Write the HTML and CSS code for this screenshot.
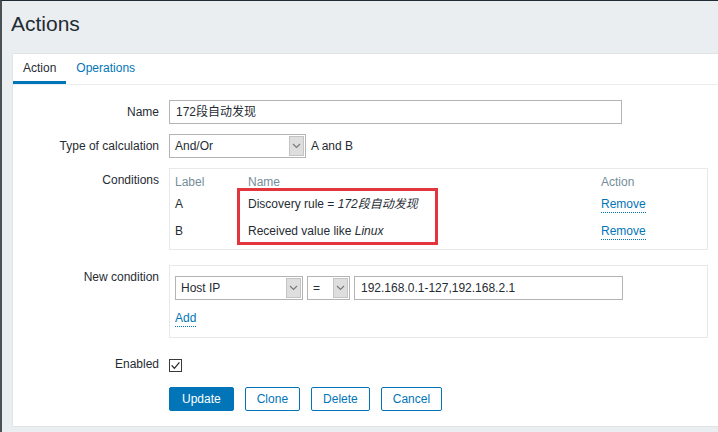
FILE: index.html
```html
<!DOCTYPE html>
<html>
<head>
<meta charset="utf-8">
<title>Actions</title>
<link rel="stylesheet" href="styles.css">
</head>
<body>
<header class="page-header">
  <h1 class="page-title">Actions</h1>
</header>
<main class="panel">
  <ul class="tabs">
    <li class="tab tab-active">Action</li>
    <li class="tab">Operations</li>
  </ul>
  <form class="form">
    <div class="row">
      <label class="label">Name</label>
      <div class="field"><div class="input input-name">172段自动发现</div></div>
    </div>
    <div class="row">
      <label class="label">Type of calculation</label>
      <div class="field field-inline">
        <div class="select select-calc"><span class="select-text">And/Or</span><span class="select-btn"><svg width="9" height="6" viewBox="0 0 9 6"><path d="M1 1l3.5 3.5L8 1" fill="none" stroke="#7a7a7a" stroke-width="1.2"/></svg></span></div>
        <span class="calc-text">A and B</span>
      </div>
    </div>
    <div class="row row-cond">
      <label class="label">Conditions</label>
      <div class="field">
        <div class="box cond-box">
          <div class="cond-grid cond-head">
            <span>Label</span><span>Name</span><span>Action</span>
          </div>
          <div class="cond-grid cond-row">
            <span>A</span><span>Discovery rule = <i>172段自动发现</i></span><span><a class="link">Remove</a></span>
          </div>
          <div class="cond-grid cond-row">
            <span>B</span><span>Received value like <i>Linux</i></span><span><a class="link">Remove</a></span>
          </div>
          <div class="highlight"></div>
        </div>
      </div>
    </div>
    <div class="row row-new">
      <label class="label">New condition</label>
      <div class="field">
        <div class="box new-box">
          <div class="new-line">
            <div class="select select-type"><span class="select-text">Host IP</span><span class="select-btn"><svg width="9" height="6" viewBox="0 0 9 6"><path d="M1 1l3.5 3.5L8 1" fill="none" stroke="#7a7a7a" stroke-width="1.2"/></svg></span></div>
            <div class="select select-op"><span class="select-text">=</span><span class="select-btn"><svg width="9" height="6" viewBox="0 0 9 6"><path d="M1 1l3.5 3.5L8 1" fill="none" stroke="#7a7a7a" stroke-width="1.2"/></svg></span></div>
            <div class="input input-ip">192.168.0.1-127,192.168.2.1</div>
          </div>
          <div class="add-line"><a class="link">Add</a></div>
        </div>
      </div>
    </div>
    <div class="row row-enabled">
      <label class="label">Enabled</label>
      <div class="field field-check">
        <svg class="checkbox" width="13" height="13" viewBox="0 0 13 13"><rect x="0.5" y="0.5" width="12" height="12" fill="#fff" stroke="#3a3a3a"/><path d="M2.6 6.4l2.8 2.9 5-6" fill="none" stroke="#2b2b2b" stroke-width="1.3"/></svg>
      </div>
    </div>
    <div class="row row-buttons">
      <span class="label"></span>
      <div class="field buttons">
        <button type="button" class="btn btn-primary">Update</button>
        <button type="button" class="btn btn-alt">Clone</button>
        <button type="button" class="btn btn-alt">Delete</button>
        <button type="button" class="btn btn-alt">Cancel</button>
      </div>
    </div>
  </form>
</main>
</body>
</html>
```
FILE: styles.css
```css
* { box-sizing: border-box; }
html, body { height: 100%; }
body {
  margin: 0;
  background: #ebeef0;
  border-top: 1px solid #1f2c33;
  border-left: 2px solid #4b5055;
  font-family: "Liberation Sans", Arial, "Noto Sans CJK SC", sans-serif;
  font-size: 12px;
  color: #1f2c33;
  overflow: hidden;
}
.page-header {
  height: 52px;
  padding: 11px 0 0 9px;
}
.page-title {
  margin: 0;
  font-size: 21px;
  line-height: 24px;
  font-weight: normal;
  color: #1f2c33;
}
.panel {
  margin-left: 10px;
  margin-right: -6px;
  background: #fff;
  border: 1px solid #dfe4e7;
  padding-bottom: 15px;
}
.tabs {
  display: flex;
  list-style: none;
  margin: 0;
  padding: 0;
  border-bottom: 1px solid #ebeef0;
  height: 31px;
}
.tab {
  padding: 1px 10px 0;
  line-height: 27px;
  color: #0275b8;
  font-size: 12px;
}
.tab-active {
  color: #1f2c33;
  border-bottom: 3px solid #0275b8;
}
.form {
  padding-top: 15px;
}
.row {
  display: grid;
  grid-template-columns: 146px 1fr;
  column-gap: 10px;
  margin-bottom: 10px;
}
.label {
  text-align: right;
  line-height: 24px;
  color: #1f2c33;
}
.field { min-height: 24px; }
.field-inline {
  display: flex;
  align-items: center;
  gap: 5px;
}
.input {
  height: 24px;
  border: 1px solid #b4b4b4;
  padding: 0 6px;
  line-height: 22px;
  background: #fff;
  color: #1f2c33;
}
.input-name { width: 453px; }
.input-ip { width: 269px; }
.select {
  display: flex;
  height: 24px;
  border: 1px solid #b4b4b4;
  background: #fff;
}
.select-text {
  flex: 1;
  padding: 0 5px;
  line-height: 22px;
}
.select-btn {
  width: 15px;
  margin: 1px;
  border: 1px solid #c4c4c4;
  background: #dedede;
  display: flex;
  align-items: center;
  justify-content: center;
}
.select-calc { width: 137px; }
.select-type { width: 128px; }
.select-op { width: 43px; }
.calc-text { line-height: 24px; }
.box {
  position: relative;
  width: 539px;
  border: 1px solid #e6e9eb;
}
.cond-box { padding: 5px 5px 4px; }
.cond-grid {
  display: grid;
  grid-template-columns: 73px 353px 1fr;
}
.cond-head {
  height: 17px;
  line-height: 17px;
  color: #768d99;
}
.cond-row {
  height: 27px;
  line-height: 27px;
}
.link {
  color: #0275b8;
  border-bottom: 1px dotted #0275b8;
  padding-bottom: 1px;
}
.highlight {
  position: absolute;
  left: 67px;
  top: 19px;
  width: 201px;
  height: 57px;
  border: 3px solid #e2353d;
}
.row-cond { margin-bottom: 15px; }
.new-box { padding: 10px 5px 9px; }
.new-line {
  display: flex;
  gap: 4px;
}
.add-line {
  margin-top: 8px;
  line-height: 20px;
}
.row-new { margin-bottom: 14px; }
.field-check {
  display: flex;
  align-items: center;
  padding-top: 2px;
}
.checkbox { display: block; }
.row-enabled { margin-bottom: 11px; }
.row-buttons { margin-bottom: 0; }
.buttons {
  display: flex;
  gap: 11px;
}
.btn {
  height: 24px;
  padding: 0 11px;
  font-family: "Liberation Sans", Arial, sans-serif;
  font-size: 12px;
  border: 1px solid #0275b8;
  border-radius: 2px;
  background: #fff;
  color: #0275b8;
}
.btn-primary {
  background: #0275b8;
  color: #fff;
  padding: 0 12px;
}
```
